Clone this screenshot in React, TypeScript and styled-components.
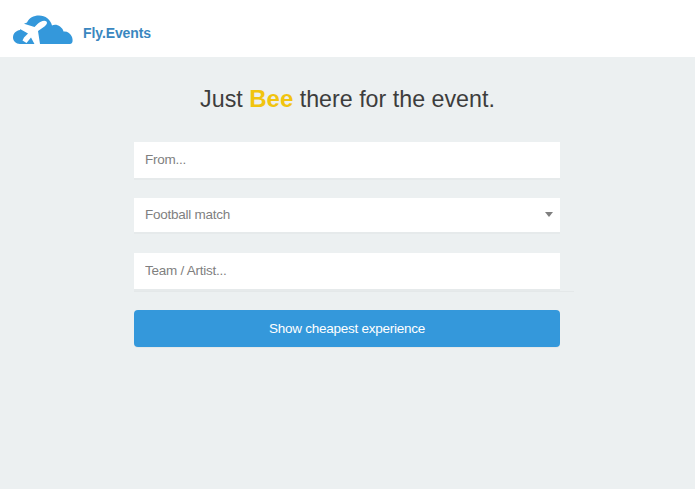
import styled, { createGlobalStyle } from 'styled-components';

const GlobalStyle = createGlobalStyle`
    html, body {
        margin: 0;
        background: #fff;
    }
    body {
        font-family: "Liberation Sans", Arial, sans-serif;
    }
`;

const Page = styled.div`
    width: 695px;
    height: 494px;
    display: flex;
    flex-direction: column;
    background: #fff;
    overflow: hidden;
`;

const Header = styled.header`
    height: 57px;
    display: flex;
    align-items: center;
    gap: 10px;
    padding: 2px 0 0 13px;
    box-sizing: border-box;
    background: #fff;
`;

const Brand = styled.span`
    padding-top: 6px;
    font-size: 14px;
    font-weight: 700;
    letter-spacing: -0.1px;
    color: #3a87c0;
`;

const Main = styled.main`
    height: 432px;
    display: flex;
    flex-direction: column;
    align-items: center;
    background: #ecf0f1;
`;

const Title = styled.h1`
    margin: 28px 0 0;
    font-size: 23.25px;
    line-height: 28px;
    font-weight: 400;
    color: #3d3d3d;
`;

const Highlight = styled.b`
    font-size: 24px;
    color: #f1c40f;
`;

const Form = styled.form`
    width: 426px;
    margin: 29px 1px 0 0;
    display: flex;
    flex-direction: column;
`;

const Input = styled.input<{ $gap: number; $height: number }>`
    width: 100%;
    height: ${(p) => p.$height}px;
    margin-bottom: ${(p) => p.$gap}px;
    padding: 0 11px 2px;
    box-sizing: border-box;
    border: 0;
    border-radius: 0;
    outline: 0;
    background: #fff;
    box-shadow: 0 2px 0 rgba(0, 0, 0, 0.025);
    font: 13.5px "Liberation Sans", Arial, sans-serif;
    letter-spacing: -0.25px;
    color: #7f7f7f;

    &::placeholder {
        color: #7f7f7f;
        opacity: 1;
    }
`;

const SelectWrap = styled.div`
    position: relative;
    margin-bottom: 21px;

    &::after {
        content: '';
        position: absolute;
        right: 7px;
        top: 14px;
        border-left: 4.5px solid transparent;
        border-right: 4.5px solid transparent;
        border-top: 5px solid #7f7f7f;
    }
`;

const Select = styled.select`
    display: block;
    width: 100%;
    height: 34px;
    padding: 0 11px 1px;
    border: 0;
    border-radius: 0;
    outline: 0;
    appearance: none;
    background: #fff;
    box-shadow: 0 2px 0 rgba(0, 0, 0, 0.025);
    font: 13.5px "Liberation Sans", Arial, sans-serif;
    letter-spacing: -0.25px;
    color: #7f7f7f;
`;

const Divider = styled.div`
    position: relative;

    &::after {
        content: '';
        position: absolute;
        left: 0;
        right: -14px;
        top: -19px;
        height: 1px;
        background: #e4e8e9;
    }
`;

const Submit = styled.button`
    width: 100%;
    height: 37px;
    border: 0;
    border-radius: 4px;
    background: #3498db;
    box-shadow: 0 1px 0 rgba(0, 0, 0, 0.03);
    font: 13.5px "Liberation Sans", Arial, sans-serif;
    letter-spacing: -0.25px;
    color: #fff;
`;

function Logo() {
    return (
        <svg width='60' height='30' viewBox='0 0 60 30' aria-hidden='true'>
            <path
                fill='#3498db'
                d='M7 29 C3 29 0 26 0 22.5 C0 18 3.5 15.5 7 15 C8 11 10.5 8.5 14 7.5 C16 3 20.5 0.5 26 0.5 C32.5 0.5 37.5 4.5 39 10.5 C41 9.5 44.5 9.5 47 11.5 C49 13 50 14.5 50.5 16.5 C54 16 57.5 18 59 22 C60 25 60 29 57 29 Z'
            />
            <path
                fill='#fff'
                d='M33.5 6.5 C31.5 4.5 27 6.5 24.5 9 L21.5 12 L7 7.5 L3.5 12 L15 18.5 L11 22.5 L9.5 25.5 L13.5 28 L18 22.5 L22 30 L27 29 L25 16 L31.5 11.5 C34 9.5 34.5 7.5 33.5 6.5 Z'
            />
        </svg>
    );
}

function App() {
    return (
        <Page>
            <GlobalStyle />
            <Header>
                <Logo />
                <Brand>Fly.Events</Brand>
            </Header>
            <Main>
                <Title>
                    Just <Highlight>Bee</Highlight> there for the event.
                </Title>
                <Form>
                    <Input $height={36} $gap={20} placeholder='From...' />
                    <SelectWrap>
                        <Select defaultValue='football'>
                            <option value='football'>Football match</option>
                        </Select>
                    </SelectWrap>
                    <Input $height={36} $gap={21} placeholder='Team / Artist...' />
                    <Divider />
                    <Submit type='button'>Show cheapest experience</Submit>
                </Form>
            </Main>
        </Page>
    );
}

export default App;
